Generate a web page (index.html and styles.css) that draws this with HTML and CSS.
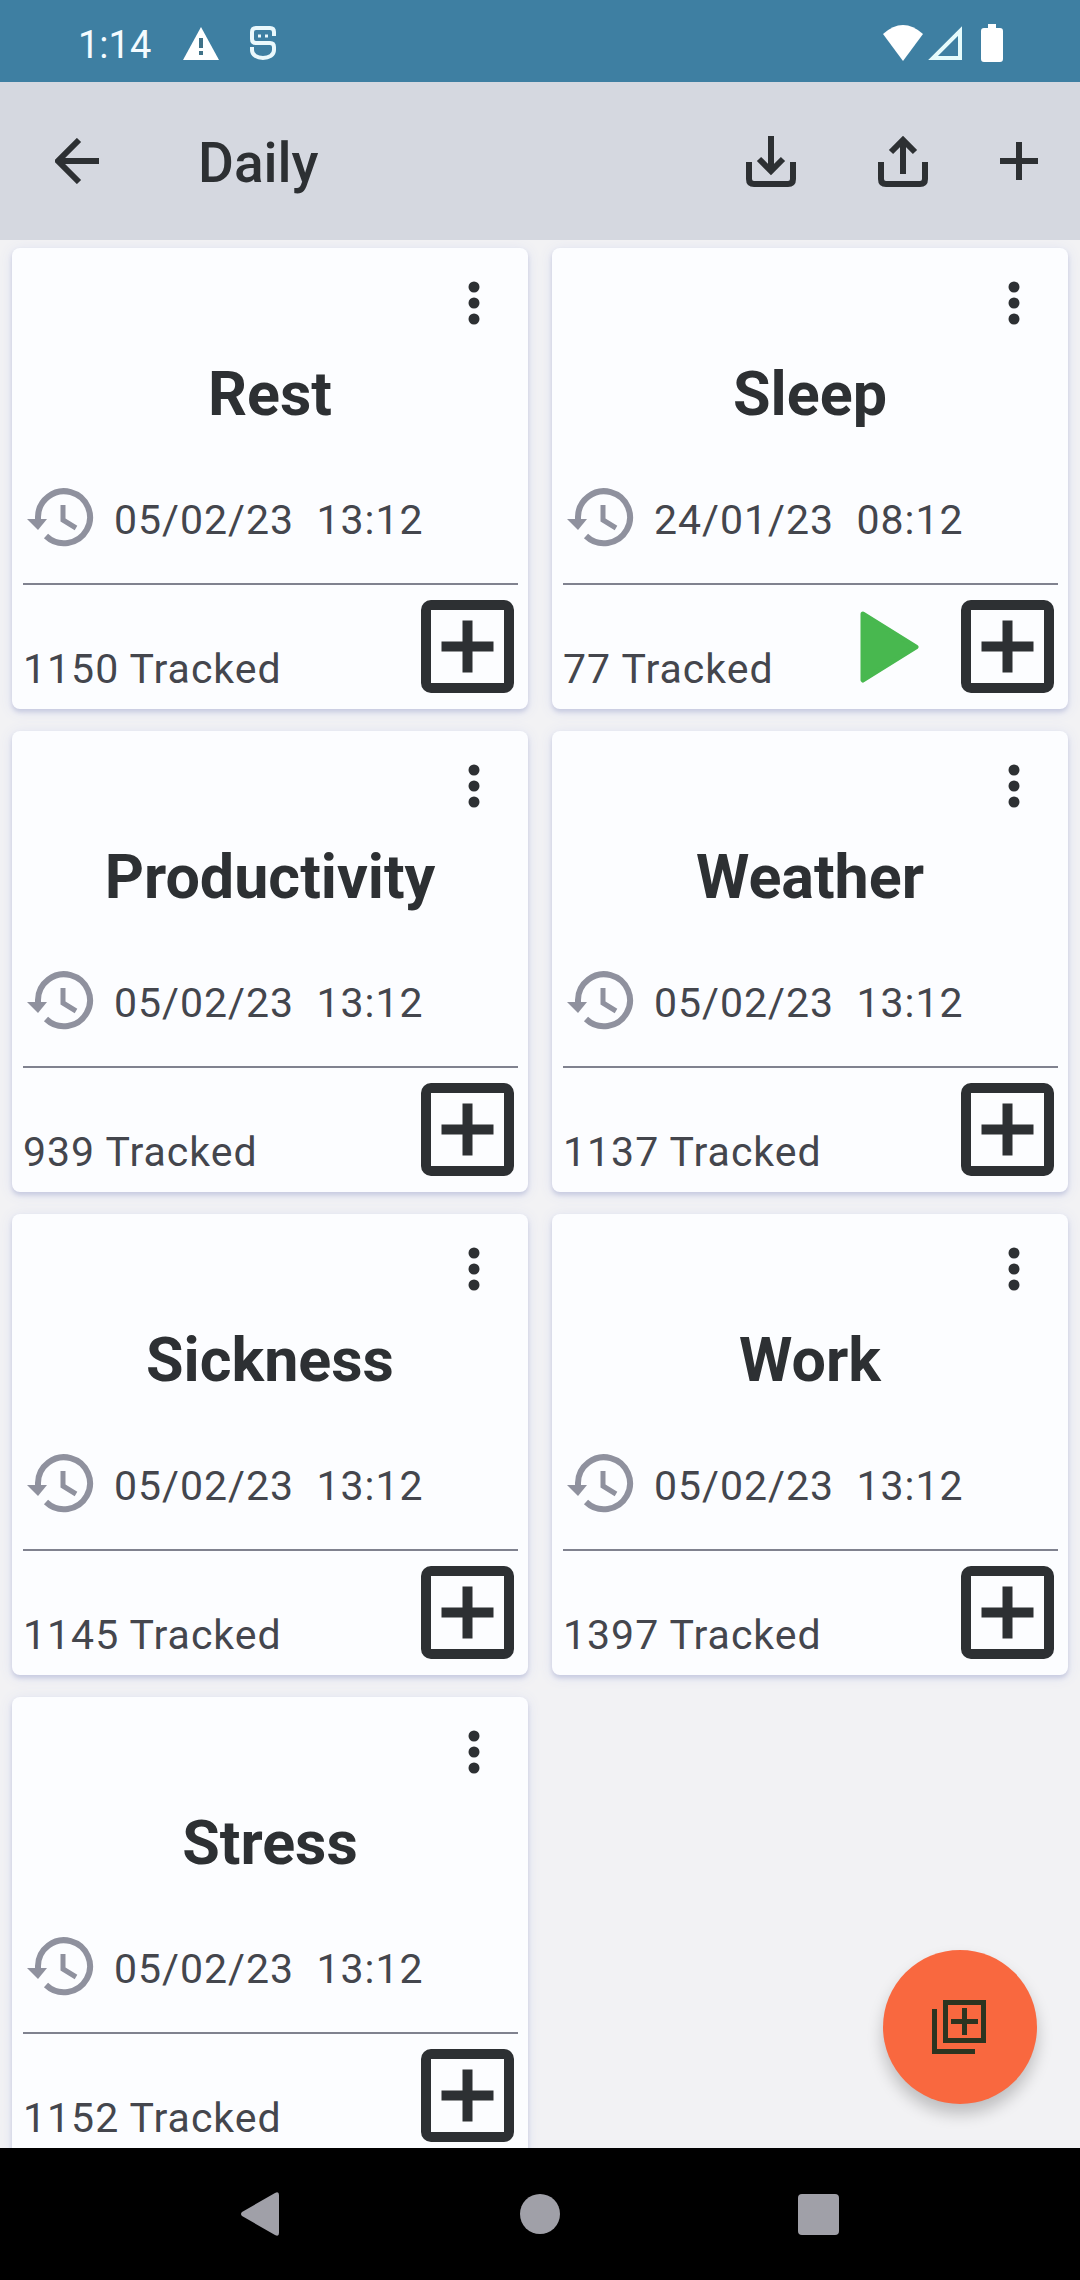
FILE: index.html
```html
<!DOCTYPE html>
<html lang="en">
<head>
<meta charset="utf-8">
<meta name="viewport" content="width=device-width, initial-scale=1">
<title>Daily</title>
<link rel="stylesheet" href="styles.css">
</head>
<body>
<svg class="sprite" aria-hidden="true">
  <symbol id="dots" viewBox="0 0 12 44"><g fill="currentColor"><circle cx="6" cy="6" r="5.5"/><circle cx="6" cy="22" r="5.5"/><circle cx="6" cy="38" r="5.5"/></g></symbol>
  <symbol id="history" viewBox="0 0 72 72">
    <path d="M14 36V33A26 26 0 1 1 22 52" fill="none" stroke="currentColor" stroke-width="6"/>
    <path d="M3 35H23L14 46Z" fill="currentColor"/>
    <path d="M39 21V36L52 44" fill="none" stroke="currentColor" stroke-width="5"/>
  </symbol>
  <symbol id="add-box" viewBox="0 0 93 93">
    <rect x="5" y="5" width="83" height="83" rx="5" fill="none" stroke="currentColor" stroke-width="10"/>
    <path d="M46.500 20.500V72.500M20.500 46.500H72.500" stroke="currentColor" stroke-width="10"/>
  </symbol>
</svg>

<div class="status">
  <span class="status-time">1:14</span>
  <svg class="warn" width="36" height="33" viewBox="0 0 36 33"><path d="M18 0L36 33H0Z" fill="#fff"/><path d="M18 11V21M18 24V28" stroke="#3f7187" stroke-width="4"/></svg>
  <svg class="sync" width="28" height="34" viewBox="0 0 28 34" fill="none" stroke="#eaf8fc" stroke-width="4"><path d="M25 10V6Q25 2 21 2H7Q3 2 3 6V13Q3 17 7 17H21Q25 17 25 21V24C25 29 20 32 14 32S3 29 3 24V21"/><path d="M9 10H12M16 10H19" stroke-width="3"/></svg>
  <div class="signals">
    <svg width="40" height="36" viewBox="0 0 40 36"><path d="M0 9Q20-9 40 9L20 36Z" fill="#fff"/></svg>
    <svg width="36" height="36" viewBox="0 0 36 36"><path d="M33 6V33H6Z" fill="none" stroke="#e6fbfc" stroke-width="4"/></svg>
    <svg class="battery" width="22" height="38" viewBox="0 0 22 38"><path d="M7 0H15V4H19Q22 4 22 7V35Q22 38 19 38H3Q0 38 0 35V7Q0 4 3 4H7Z" fill="#fff"/></svg>
  </div>
</div>

<header class="bar">
  <button class="icon-btn" aria-label="Back"><svg width="44" height="46" viewBox="0 0 44 46" fill="none" stroke="currentColor" stroke-width="6"><path d="M24 2L3 23L24 44M3 23H44"/></svg></button>
  <h1>Daily</h1>
  <div class="actions">
    <button class="icon-btn" aria-label="Import"><svg width="52" height="52" viewBox="0 0 52 52" fill="none" stroke="currentColor" stroke-width="6"><path d="M4 27V44Q4 49 9 49H43Q48 49 48 44V27M26 1V36M14 24L26 36L38 24"/></svg></button>
    <button class="icon-btn" aria-label="Export"><svg width="52" height="52" viewBox="0 0 52 52" fill="none" stroke="currentColor" stroke-width="6"><path d="M4 27V44Q4 49 9 49H43Q48 49 48 44V27M26 39V6M14 17L26 5L38 17"/></svg></button>
    <button class="icon-btn" aria-label="Add"><svg width="38" height="38" viewBox="0 0 38 38" stroke="currentColor" stroke-width="6"><path d="M19 0V38M0 19H38"/></svg></button>
  </div>
</header>

<div class="content">
  <main class="grid">
    <article class="card">
      <button class="menu" aria-label="Rest options"><svg><use href="#dots"/></svg></button>
      <h2>Rest</h2>
      <p class="last"><svg><use href="#history"/></svg><time>05/02/23  13:12</time></p>
      <footer><span class="count">1150 Tracked</span><button class="add" aria-label="Add Rest"><svg><use href="#add-box"/></svg></button></footer>
    </article>
    <article class="card">
      <button class="menu" aria-label="Sleep options"><svg><use href="#dots"/></svg></button>
      <h2>Sleep</h2>
      <p class="last"><svg><use href="#history"/></svg><time>24/01/23  08:12</time></p>
      <footer><span class="count">77 Tracked</span><button class="play" aria-label="Start Sleep"><svg width="60" height="74" viewBox="0 0 60 74"><path d="M3 4L56 37L3 70Z" fill="#48b84f" stroke="#48b84f" stroke-width="5" stroke-linejoin="round"/></svg></button><button class="add" aria-label="Add Sleep"><svg><use href="#add-box"/></svg></button></footer>
    </article>
    <article class="card">
      <button class="menu" aria-label="Productivity options"><svg><use href="#dots"/></svg></button>
      <h2>Productivity</h2>
      <p class="last"><svg><use href="#history"/></svg><time>05/02/23  13:12</time></p>
      <footer><span class="count">939 Tracked</span><button class="add" aria-label="Add Productivity"><svg><use href="#add-box"/></svg></button></footer>
    </article>
    <article class="card">
      <button class="menu" aria-label="Weather options"><svg><use href="#dots"/></svg></button>
      <h2>Weather</h2>
      <p class="last"><svg><use href="#history"/></svg><time>05/02/23  13:12</time></p>
      <footer><span class="count">1137 Tracked</span><button class="add" aria-label="Add Weather"><svg><use href="#add-box"/></svg></button></footer>
    </article>
    <article class="card">
      <button class="menu" aria-label="Sickness options"><svg><use href="#dots"/></svg></button>
      <h2>Sickness</h2>
      <p class="last"><svg><use href="#history"/></svg><time>05/02/23  13:12</time></p>
      <footer><span class="count">1145 Tracked</span><button class="add" aria-label="Add Sickness"><svg><use href="#add-box"/></svg></button></footer>
    </article>
    <article class="card">
      <button class="menu" aria-label="Work options"><svg><use href="#dots"/></svg></button>
      <h2>Work</h2>
      <p class="last"><svg><use href="#history"/></svg><time>05/02/23  13:12</time></p>
      <footer><span class="count">1397 Tracked</span><button class="add" aria-label="Add Work"><svg><use href="#add-box"/></svg></button></footer>
    </article>
    <article class="card">
      <button class="menu" aria-label="Stress options"><svg><use href="#dots"/></svg></button>
      <h2>Stress</h2>
      <p class="last"><svg><use href="#history"/></svg><time>05/02/23  13:12</time></p>
      <footer><span class="count">1152 Tracked</span><button class="add" aria-label="Add Stress"><svg><use href="#add-box"/></svg></button></footer>
    </article>
  </main>
  <button class="fab" aria-label="Add to all"><svg width="56" height="54" viewBox="0 0 56 54" fill="none" stroke="currentColor" stroke-width="5"><path d="M2.500 9V51.500H43"/><rect x="13.500" y="2.500" width="38" height="38"/><path d="M32.500 8V35M19 21.500H46"/></svg></button>
</div>

<nav class="nav">
  <button aria-label="Back"><svg width="42" height="44" viewBox="0 0 42 44"><path d="M34 1Q38-1 38 3V41Q38 45 34 43L1 24Q-1 22 1 20Z" fill="currentColor"/></svg></button>
  <button aria-label="Home"><svg width="40" height="40" viewBox="0 0 40 40"><circle cx="20" cy="20" r="20" fill="currentColor"/></svg></button>
  <button aria-label="Recent apps"><svg width="41" height="41" viewBox="0 0 41 41"><rect width="41" height="41" rx="4" fill="currentColor"/></svg></button>
</nav>
</body>
</html>
```

FILE: styles.css
```css
* { box-sizing: border-box; }

body {
  margin: 0;
  height: 100vh;
  display: flex;
  flex-direction: column;
  background: #f2f2f4;
  color: #2d3033;
  font-family: Roboto, "Liberation Sans", sans-serif;
}

h1, h2, p { margin: 0; }

svg { display: block; flex: none; }

.sprite { display: none; }

button {
  display: flex;
  align-items: center;
  justify-content: center;
  padding: 0;
  border: 0;
  background: none;
  color: inherit;
  font: inherit;
  cursor: pointer;
}

/* status bar */
.status {
  flex: none;
  display: flex;
  align-items: center;
  height: 82px;
  padding: 4px 77px 0 78px;
  background: #3e7fa2;
  color: #f4fbff;
}

.status-time {
  padding-top: 4px;
  font-size: 38px;
  line-height: 44px;
}

.warn { margin-left: 32px; }
.sync { margin-left: 30px; }

.signals {
  display: flex;
  align-items: center;
  gap: 4px;
  margin-left: auto;
}

.battery { margin-left: 14px; }

/* app bar */
.bar {
  flex: none;
  display: flex;
  align-items: center;
  height: 158px;
  padding: 0 42px 0 55px;
  background: #d5d8e0;
}

.bar h1 {
  margin-left: 99px;
  padding-top: 4px;
  font-size: 55px;
  font-weight: 500;
  line-height: 64px;
}

.actions {
  display: flex;
  align-items: center;
  gap: 80px;
  margin-left: auto;
}

.actions .icon-btn:last-child { margin-left: -9px; }

/* cards */
.content {
  position: relative;
  flex: 1;
  min-height: 0;
}

.grid {
  display: grid;
  grid-template-columns: 1fr 1fr;
  align-content: start;
  gap: 22px 24px;
  height: 100%;
  padding: 8px 12px;
  overflow: hidden;
}

.card {
  display: flex;
  flex-direction: column;
  border-radius: 8px;
  background: #fcfdff;
  box-shadow: 0 3px 4px #c9cce0, 0 2px 14px #dcdff0;
}

.menu {
  align-self: flex-end;
  width: 108px;
  height: 110px;
}

.menu svg { width: 12px; height: 44px; }

.card h2 {
  font-size: 61px;
  font-weight: 700;
  line-height: 72px;
  text-align: center;
}

.last {
  display: flex;
  align-items: center;
  gap: 18px;
  margin: 54px 11px 27px 12px;
}

.last svg { width: 72px; height: 72px; color: #8f919e; }

.last time, .count {
  color: #44464d;
  font-size: 41px;
  line-height: 48px;
  letter-spacing: 1px;
  white-space: pre;
}

.card footer {
  display: flex;
  align-items: flex-end;
  padding: 17px 14px 16px 11px;
  position: relative;
}

.card footer::before {
  content: "";
  position: absolute;
  inset: 0 10px auto 11px;
  height: 2px;
  background: #80828f;
}

.count { margin-right: auto; }
.add svg { width: 93px; height: 93px; }

.play {
  height: 93px;
  margin-right: 41px;
}

.fab {
  position: absolute;
  right: 43px;
  bottom: 44px;
  width: 154px;
  height: 154px;
  border-radius: 50%;
  background: #f9683f;
  color: #2c3420;
  box-shadow: 0 10px 16px #00000038;
}

/* system navigation */
.nav {
  flex: none;
  display: flex;
  align-items: center;
  justify-content: center;
  gap: 218px;
  height: 132px;
  background: #000;
  color: #a0a0a8;
}

.nav button { width: 60px; height: 60px; }
```
